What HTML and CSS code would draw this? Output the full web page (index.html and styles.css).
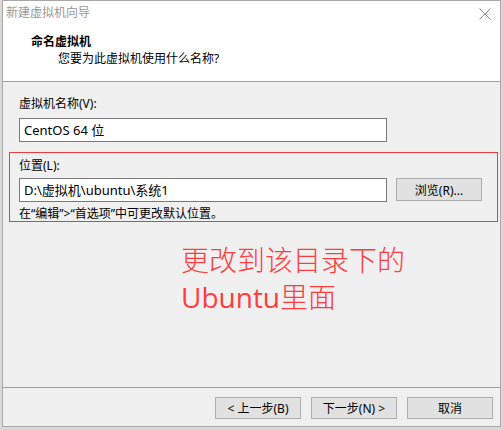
FILE: index.html
```html
<!DOCTYPE html>
<html lang="zh-CN">
<head>
    <meta charset="UTF-8">
    <title>新建虚拟机向导</title>
    <link rel="stylesheet" href="styles.css">
</head>
<body>
    <div class="window">
        <div class="top">
            <div class="titlebar">
                <span class="title">新建虚拟机向导</span>
                <svg class="close" width="12" height="12" viewBox="0 0 12 12">
                    <path d="M0.5 0.5 L11.5 11.5 M11.5 0.5 L0.5 11.5" stroke="#8a8a8a" stroke-width="1" fill="none"/>
                </svg>
            </div>
            <div class="page-head">
                <h1>命名虚拟机</h1>
                <p>您要为此虚拟机使用什么名称?</p>
            </div>
        </div>

        <div class="content">
            <label class="field-label">虚拟机名称(V):</label>
            <div class="textbox">CentOS 64 位</div>

            <div class="marked">
                <label class="field-label">位置(L):</label>
                <div class="row">
                    <div class="textbox">D:\虚拟机\ubuntu\系统1</div>
                    <button class="btn">浏览(R)...</button>
                </div>
                <p class="hint">在“编辑”&gt;“首选项”中可更改默认位置。</p>
            </div>

            <p class="note">更改到该目录下的<br><span class="latin">Ubuntu</span>里面</p>
        </div>

        <div class="footer">
            <button class="btn">&lt; 上一步(B)</button>
            <button class="btn">下一步(N) &gt;</button>
            <button class="btn">取消</button>
        </div>
    </div>
</body>
</html>
```

FILE: styles.css
```css
body {
    margin: 0;
    background-color: #d9d9d9;
    font-family: "Noto Sans", "Noto Sans CJK SC", sans-serif;
    font-size: 12px;
    line-height: 16px;
    color: #000;
}
.window {
    margin-left: 2px;
    width: 497px;
    border: 1px solid #a8a8a8;
    background-color: #f0f0f0;
}
.top {
    background-color: #fff;
    border-bottom: 1px solid #a0a0a0;
}
.titlebar {
    height: 29px;
    padding: 4px 9px 0 3px;
    box-sizing: border-box;
    display: flex;
    justify-content: space-between;
    align-items: flex-start;
}
.title {
    color: #999;
}
.close {
    margin-top: 3px;
}
.page-head {
    padding: 4px 0 14px 28px;
}
.page-head h1 {
    margin: 0;
    font-size: 12px;
    font-weight: bold;
}
.page-head p {
    margin: 1px 0 0 27px;
}
.content {
    height: 305px;
    box-sizing: border-box;
    padding: 14px 0 0 16px;
}
.field-label {
    display: block;
    margin-bottom: 6px;
}
.textbox {
    width: 368px;
    height: 24px;
    box-sizing: border-box;
    border: 1px solid #7a7a7a;
    background-color: #fff;
    padding: 3px 4px;
    font-size: 13px;
}
.marked {
    margin: 10px 2px 0 -10px;
    height: 70px;
    box-sizing: border-box;
    border: 1px solid #ee3b3b;
    padding: 5px 0 0 9px;
}
.marked .field-label {
    margin-bottom: 4px;
}
.row {
    display: flex;
    gap: 9px;
}
.btn {
    width: 86px;
    height: 23px;
    border: 1px solid #adadad;
    background-color: #e1e1e1;
    font-family: inherit;
    font-size: 12px;
    padding: 0;
    color: #000;
}
.hint {
    margin: 4px 0 0;
}
.note {
    margin: 19px 0 0 162px;
    font-family: "Noto Sans CJK SC", sans-serif;
    font-weight: 300;
    font-size: 28px;
    line-height: 37px;
    color: #ff3d3d;
}
.note .latin {
    font-family: "Open Sans", "Noto Sans", sans-serif;
    font-weight: 400;
}
.footer {
    border-top: 1px solid #a0a0a0;
    height: 39px;
    box-sizing: border-box;
    padding: 9px 7px 0 0;
    display: flex;
    justify-content: flex-end;
    gap: 10px;
}
.footer .btn {
    height: 22px;
}
```
